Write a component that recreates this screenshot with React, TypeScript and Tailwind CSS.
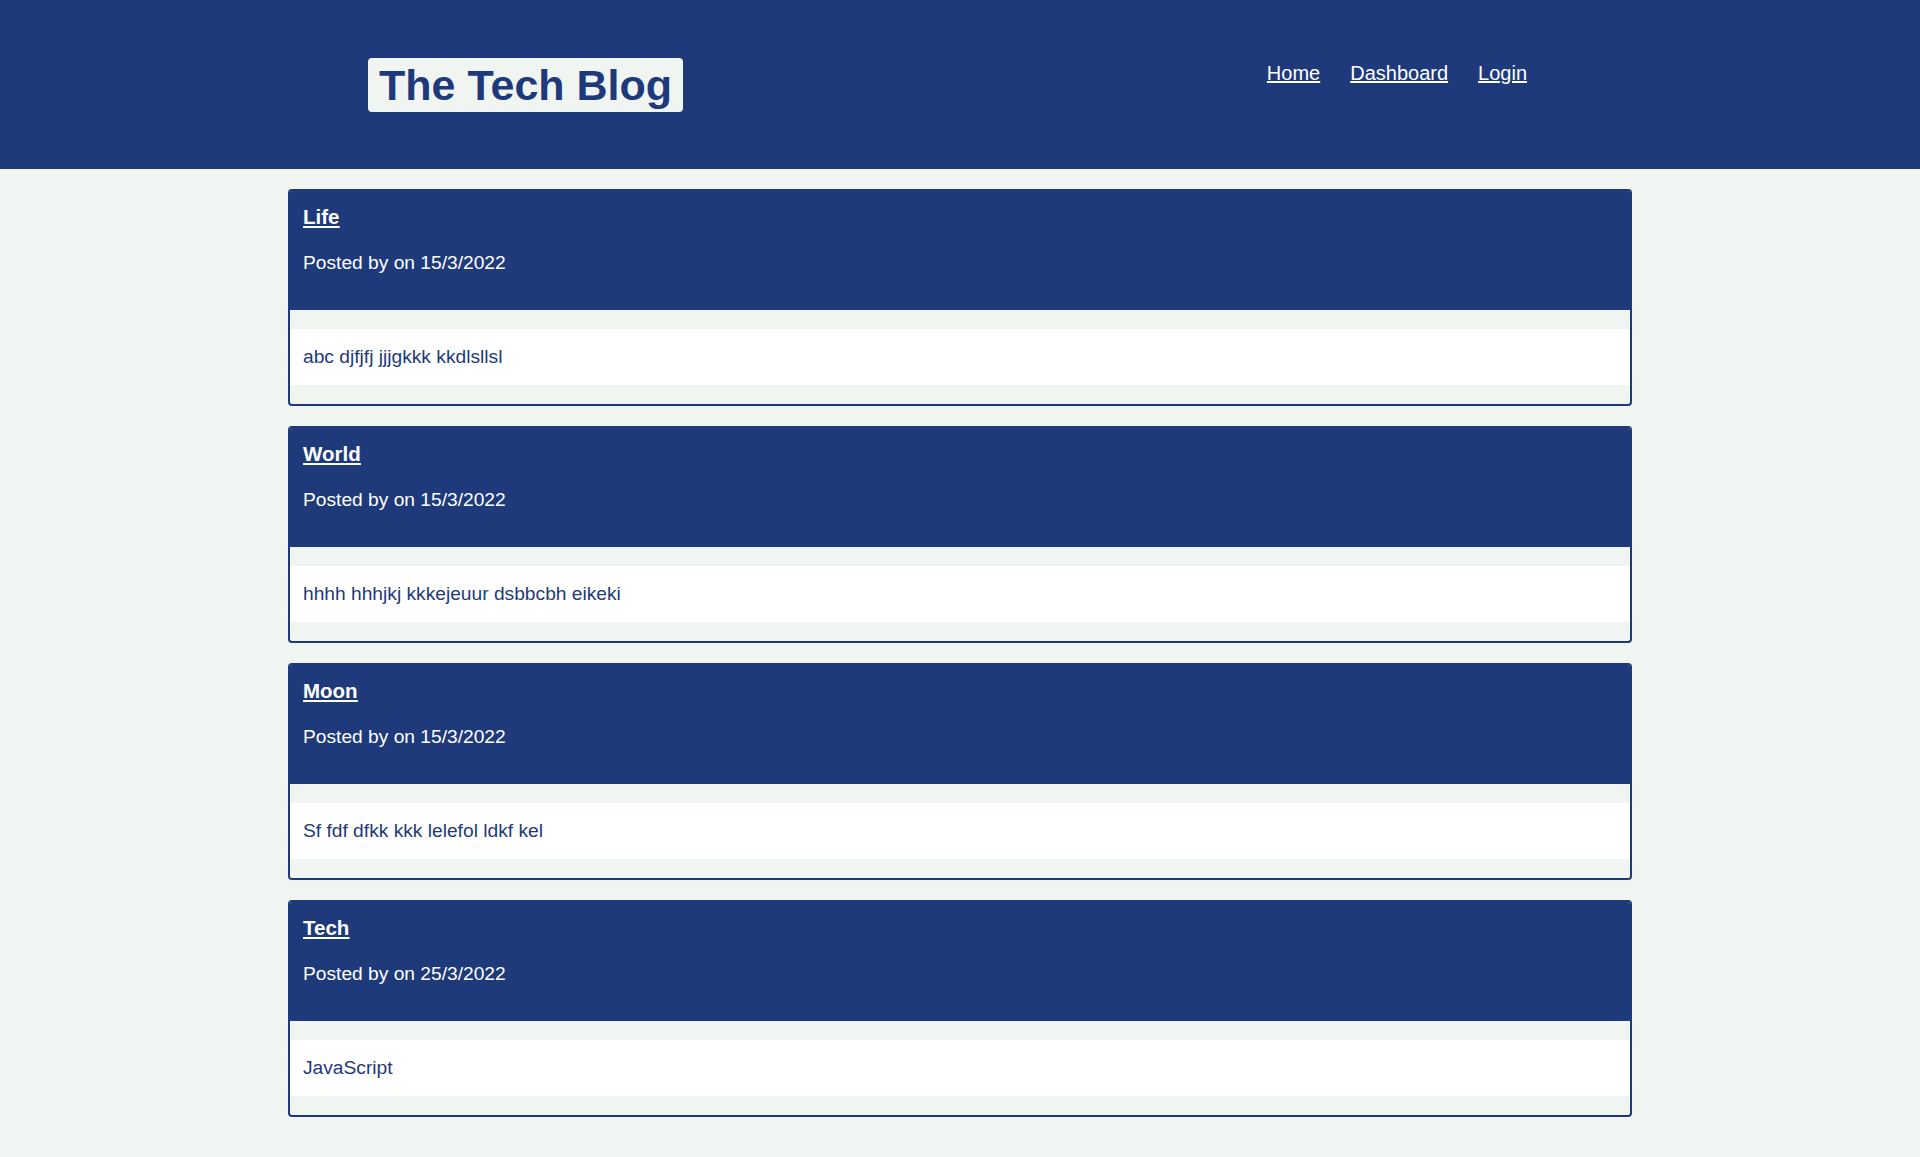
import React from "react";

type Post = { title: string; date: string; body: string };

const posts: Post[] = [
  { title: "Life", date: "15/3/2022", body: "abc djfjfj jjjgkkk kkdlsllsl" },
  { title: "World", date: "15/3/2022", body: "hhhh hhhjkj kkkejeuur dsbbcbh eikeki" },
  { title: "Moon", date: "15/3/2022", body: "Sf fdf dfkk kkk lelefol ldkf kel" },
  { title: "Tech", date: "25/3/2022", body: "JavaScript" },
];

function PostCard({ post }: { post: Post }) {
  return (
    <div className="w-[1344px] border-2 border-[#1e3a7b] rounded-[4px] bg-[#f1f5f2] overflow-hidden">
      <div className="bg-[#1e3a7b] pl-[13px] pr-3 pt-[14px] pb-[36px] text-white">
        <h2 className="text-[20.5px] leading-[23px] font-bold underline mb-6">
          <a href="#">{post.title}</a>
        </h2>
        <p className="text-[19.2px] leading-[22px]">Posted by on {post.date}</p>
      </div>
      <div className="my-[19px] bg-white pl-[13px] pr-3 py-[17px]">
        <p className="text-[19.2px] leading-[22px] text-[#1e3a7b]">{post.body}</p>
      </div>
    </div>
  );
}

export default function App() {
  return (
    <div
      className="min-h-screen bg-[#f1f5f2]"
      style={{ fontFamily: '"Liberation Sans", Arial, sans-serif' }}
    >
      <header className="h-[169px] bg-[#1e3a7b] flex justify-between items-start pt-[58px] pl-[368px] pr-[393px]">
        <h1 className="bg-[#f1f5f2] text-[#1e3a7b] text-[43px] leading-[50px] font-bold px-[11px] py-[2px] rounded-[4px]">
          The Tech Blog
        </h1>
        <nav className="flex gap-[30px] pt-[4px] text-white text-[20px] leading-[23px]">
          <a href="#" className="underline">Home</a>
          <a href="#" className="underline">Dashboard</a>
          <a href="#" className="underline">Login</a>
        </nav>
      </header>
      <main className="flex flex-col items-center gap-5 pt-5 pb-[41px]">
        {posts.map((p) => (
          <PostCard key={p.title} post={p} />
        ))}
      </main>
    </div>
  );
}
